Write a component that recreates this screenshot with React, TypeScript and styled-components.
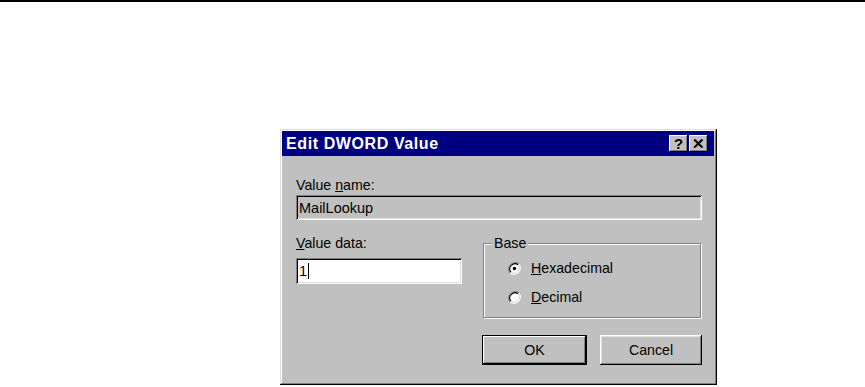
import styled, { createGlobalStyle } from "styled-components";

const GlobalStyle = createGlobalStyle`
  html, body {
    margin: 0;
    padding: 0;
    background: #ffffff;
  }
  body {
    font-family: "Liberation Sans", Arial, sans-serif;
  }
`;

const Page = styled.div`
  width: 865px;
  height: 387px;
  overflow: hidden;
  display: flex;
  flex-direction: column;
`;

const TopRule = styled.div`
  height: 2px;
  background: #000;
  flex: none;
`;

const Stage = styled.div`
  padding: 127px 0 0 280px;
`;

const Window = styled.div`
  width: 437px;
  height: 256px;
  box-sizing: border-box;
  background: #c0c0c0;
  padding: 2px 3px 3px 2px;
  box-shadow: inset -1px -1px #000, inset 1px 1px #dfdfdf,
    inset -2px -2px #808080, inset 2px 2px #fff;
  display: flex;
  flex-direction: column;
`;

const TitleBar = styled.div`
  height: 25px;
  background: #000080;
  display: flex;
  align-items: center;
  justify-content: space-between;
  padding: 0 6px 0 4px;
`;

const Title = styled.span`
  color: #fff;
  font-weight: bold;
  font-size: 16px;
  letter-spacing: 0.6px;
`;

const TitleButtons = styled.div`
  display: flex;
  gap: 1px;
`;

const TitleButton = styled.div`
  width: 19px;
  height: 17px;
  box-sizing: border-box;
  background: #c0c0c0;
  box-shadow: inset -1px -1px #000, inset 1px 1px #fff,
    inset -2px -2px #808080;
  display: flex;
  align-items: center;
  justify-content: center;
  color: #000;
  font-weight: bold;
  font-size: 15px;
  line-height: 1;
`;

const Body = styled.div`
  padding: 21px 12px 0 14px;
  display: flex;
  flex-direction: column;
  font-size: 14.2px;
  color: #000;
`;

interface LabelProps {
  $gap: number;
}

const Label = styled.div<LabelProps>`
  height: 16px;
  line-height: 16px;
  margin-bottom: ${({ $gap }) => $gap}px;
`;

interface FieldProps {
  $readOnly?: boolean;
  $height: number;
}

const Field = styled.div<FieldProps>`
  height: ${({ $height }) => $height}px;
  box-sizing: border-box;
  background: ${({ $readOnly }) => ($readOnly ? "#c0c0c0" : "#fff")};
  box-shadow: inset 1px 1px #808080, inset -1px -1px #fff,
    inset 2px 2px #000, inset -2px -2px #dfdfdf;
  display: flex;
  align-items: center;
  padding: 0 3px;
  font-size: 14.5px;
`;

const Caret = styled.span`
  display: inline-block;
  width: 1px;
  height: 16px;
  background: #000;
  margin-left: 1px;
`;

const MiddleRow = styled.div`
  display: grid;
  grid-template-columns: 166px 218px;
  column-gap: 21px;
  margin-top: 15px;
`;

const Column = styled.div`
  display: flex;
  flex-direction: column;
`;

const GroupBox = styled.fieldset`
  margin: 0;
  padding: 8px 0 0 24px;
  height: 83px;
  box-sizing: border-box;
  border: 1px solid #808080;
  box-shadow: inset 1px 1px #fff, 1px 1px #fff;
  display: flex;
  flex-direction: column;
  gap: 11px;
`;

const Legend = styled.legend`
  padding: 0 2px;
  margin-left: -16px;
  background: #c0c0c0;
  line-height: 16px;
  font-size: 14.2px;
`;

const RadioRow = styled.div`
  display: flex;
  align-items: center;
  gap: 10px;
  height: 18px;
`;

const ButtonRow = styled.div`
  display: flex;
  justify-content: flex-end;
  gap: 13px;
  margin-top: 17px;
`;

interface PushButtonProps {
  $isDefault?: boolean;
}

const PushButton = styled.div<PushButtonProps>`
  width: ${({ $isDefault }) => ($isDefault ? "105px" : "102px")};
  height: 30px;
  box-sizing: border-box;
  background: #c0c0c0;
  display: flex;
  align-items: center;
  justify-content: center;
  font-size: 14.2px;
  box-shadow: ${({ $isDefault }) =>
    $isDefault
      ? "inset 0 0 0 1px #000, inset -2px -2px #000, inset 2px 2px #fff, inset -3px -3px #808080"
      : "inset -1px -1px #000, inset 1px 1px #fff, inset -2px -2px #808080, inset 2px 2px #dfdfdf"};
`;

const Radio = ({ checked }: { checked: boolean }) => (
  <svg width="13" height="13" viewBox="0 0 12 12">
    <path d="M10.2 1.8 A6 6 0 0 0 1.8 10.2" fill="none" stroke="#808080" strokeWidth="1" />
    <path d="M1.8 10.2 A6 6 0 0 0 10.2 1.8" fill="none" stroke="#fff" strokeWidth="1" />
    <circle cx="6" cy="6" r="4.6" fill="#fff" />
    <path d="M9.3 2.7 A4.7 4.7 0 0 0 2.7 9.3" fill="none" stroke="#000" strokeWidth="1" />
    <path d="M2.7 9.3 A4.7 4.7 0 0 0 9.3 2.7" fill="none" stroke="#dfdfdf" strokeWidth="1" />
    {checked ? <circle cx="6" cy="6" r="1.6" fill="#000" /> : null}
  </svg>
);

const App = () => {
  return (
    <Page>
      <GlobalStyle />
      <TopRule />
      <Stage>
        <Window>
          <TitleBar>
            <Title>Edit DWORD Value</Title>
            <TitleButtons>
              <TitleButton>?</TitleButton>
              <TitleButton>✕</TitleButton>
            </TitleButtons>
          </TitleBar>
          <Body>
            <Label $gap={2}>
              Value <u>n</u>ame:
            </Label>
            <Field $readOnly $height={25}>
              MailLookup
            </Field>
            <MiddleRow>
              <Column>
                <Label $gap={7}>
                  <u>V</u>alue data:
                </Label>
                <Field $height={26}>
                  1<Caret />
                </Field>
              </Column>
              <GroupBox>
                <Legend>Base</Legend>
                <RadioRow>
                  <Radio checked />
                  <span>
                    <u>H</u>exadecimal
                  </span>
                </RadioRow>
                <RadioRow>
                  <Radio checked={false} />
                  <span>
                    <u>D</u>ecimal
                  </span>
                </RadioRow>
              </GroupBox>
            </MiddleRow>
            <ButtonRow>
              <PushButton $isDefault>OK</PushButton>
              <PushButton>Cancel</PushButton>
            </ButtonRow>
          </Body>
        </Window>
      </Stage>
    </Page>
  );
};

export default App;
